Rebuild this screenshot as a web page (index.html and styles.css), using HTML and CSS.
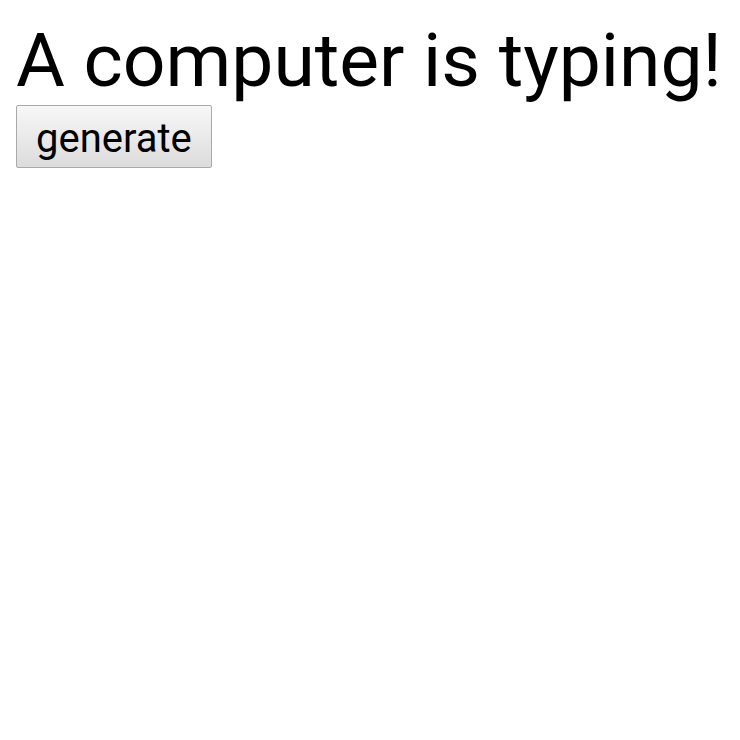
FILE: index.html
```html
<!DOCTYPE html>
<html>
<head>
<meta charset="utf-8">
<link rel="stylesheet" href="styles.css">
</head>
<body>
<h1 class="title">A computer is typing!</h1>
<button class="gen-btn">generate</button>
</body>
</html>
```
FILE: styles.css
```css
html, body {
  margin: 0;
  background: #ffffff;
}
body {
  padding: 16px;
  font-family: Roboto, "Noto Sans", sans-serif;
  color: #000;
}
.title {
  margin: 0;
  font-size: 75px;
  font-weight: 400;
  line-height: normal;
}
.gen-btn {
  display: block;
  margin-top: 1px;
  font-family: Roboto, "Noto Sans", sans-serif;
  font-size: 40px;
  line-height: normal;
  color: #000;
  padding: 9px 19px 5px;
  border: 1px solid #a9a9a9;
  border-radius: 2px;
  background: linear-gradient(#f7f7f7, #dcdcdc);
}
```
